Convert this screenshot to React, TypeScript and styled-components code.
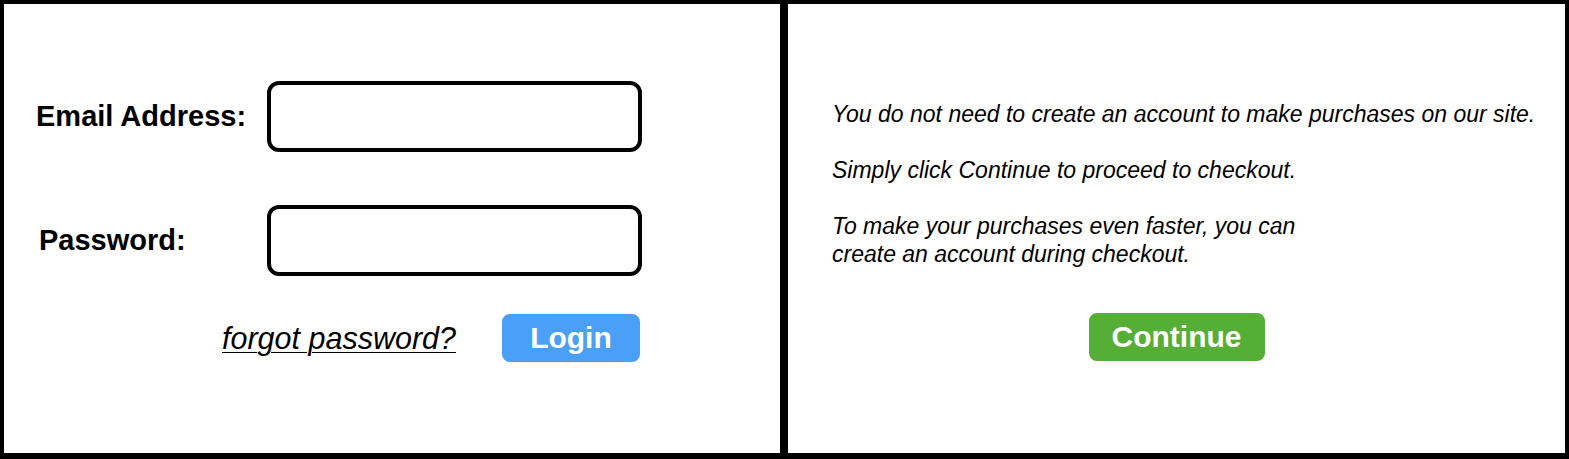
import styled, { createGlobalStyle } from 'styled-components';

const GlobalStyle = createGlobalStyle`
  * {
    box-sizing: border-box;
  }

  body {
    margin: 0;
    background: #ffffff;
    font-family: 'Liberation Sans', Arial, sans-serif;
    color: #000000;
  }
`;

export default function App() {
  return (
    <>
      <GlobalStyle />
      <Page>
        <LoginPanel>
          <FieldRow>
            <FieldLabel>Email Address:</FieldLabel>
            <TextBox type='email' />
          </FieldRow>
          <FieldRow>
            <FieldLabel $indent={3}>Password:</FieldLabel>
            <TextBox type='password' />
          </FieldRow>
          <ActionRow>
            <ForgotLink href='#'>forgot password?</ForgotLink>
            <ActionButton $bg='#4aa0f6' $width={138}>
              Login
            </ActionButton>
          </ActionRow>
        </LoginPanel>
        <GuestPanel>
          <Notice>
            <p>You do not need to create an account to make purchases on our site.</p>
            <p>Simply click Continue to proceed to checkout.</p>
            <p>
              To make your purchases even faster, you can
              <br />
              create an account during checkout.
            </p>
          </Notice>
          <ActionButton $bg='#55ae35' $width={176}>
            Continue
          </ActionButton>
        </GuestPanel>
      </Page>
    </>
  );
}

const Page = styled.div`
  display: grid;
  grid-template-columns: 784px 785px;
  width: 1569px;
  height: 459px;
`;

const Panel = styled.section`
  display: flex;
  flex-direction: column;
  height: 100%;
  border: 4px solid #000000;
  border-bottom-width: 6px;
`;

const LoginPanel = styled(Panel)`
  padding: 77px 0 0 32px;
  row-gap: 53px;
`;

const FieldRow = styled.div`
  display: grid;
  grid-template-columns: 231px 375px;
  align-items: center;
  height: 71px;
`;

const FieldLabel = styled.label<{ $indent?: number }>`
  padding-left: ${(p) => p.$indent ?? 0}px;
  font-size: 29px;
  font-weight: 700;
`;

const TextBox = styled.input`
  width: 375px;
  height: 71px;
  border: 4px solid #000000;
  border-radius: 12px;
  background: #ffffff;
  outline: none;
`;

const ActionRow = styled.div`
  display: flex;
  align-items: center;
  gap: 46px;
  margin-top: -15px;
  padding-left: 186px;
`;

const ForgotLink = styled.a`
  font-size: 30.5px;
  font-style: italic;
  color: #000000;
  text-decoration: underline;
  text-underline-offset: 3px;
  text-decoration-thickness: 1px;
`;

const ActionButton = styled.button<{ $bg: string; $width: number }>`
  width: ${(p) => p.$width}px;
  height: 48px;
  border: none;
  border-radius: 8px;
  background: ${(p) => p.$bg};
  color: #ffffff;
  font-family: 'Liberation Sans', Arial, sans-serif;
  font-size: 30px;
  font-weight: 700;
  padding: 0;
`;

const GuestPanel = styled(Panel)`
  align-items: center;
  padding-top: 96px;
`;

const Notice = styled.div`
  align-self: stretch;
  padding-left: 44px;
  margin-bottom: 45px;
  font-size: 23px;
  font-style: italic;
  line-height: 28px;

  p {
    margin: 0 0 28px 0;
  }

  p:last-child {
    margin-bottom: 0;
  }
`;
